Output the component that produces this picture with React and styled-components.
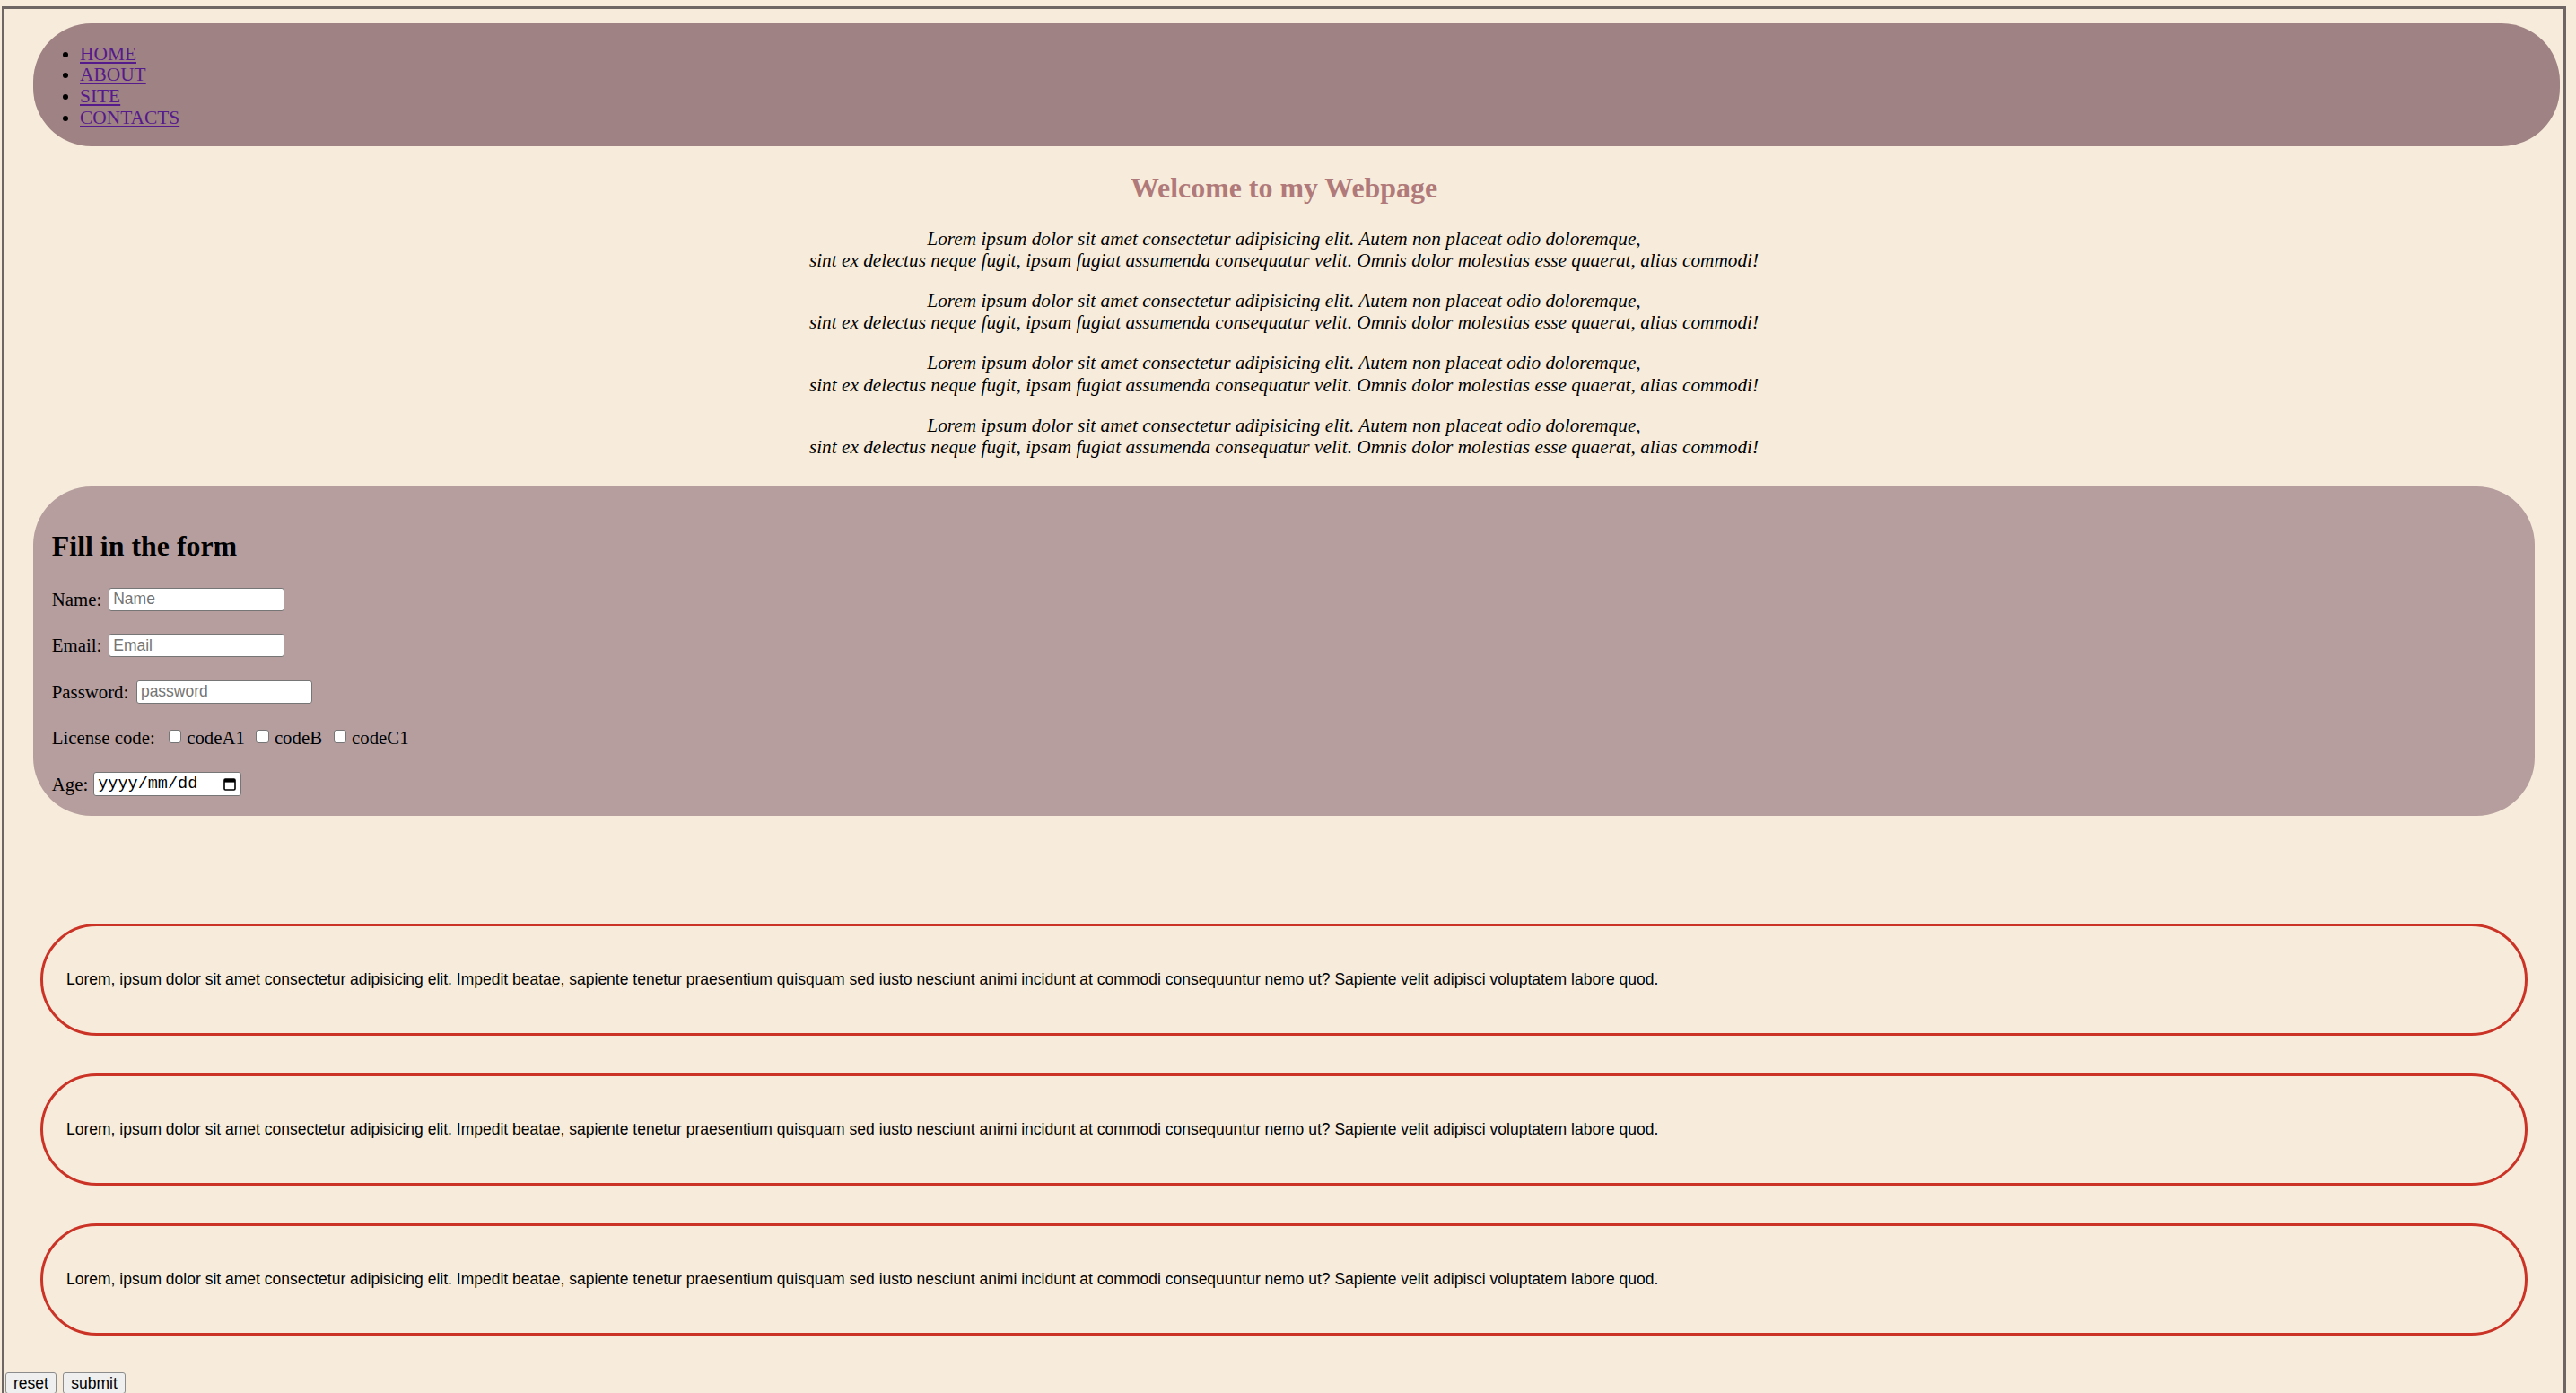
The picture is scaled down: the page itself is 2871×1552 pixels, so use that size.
import React from "react";
import styled, { createGlobalStyle } from "styled-components";

const GlobalStyle = createGlobalStyle`
  body {
    margin: 7px 11px 0 2px;
    background: #f7ecdb;
    font-family: "Liberation Serif", "Times New Roman", serif;
    font-size: 20.8px;
    color: #000;
  }
`;

const Frame = styled.div`
  border: 3px solid #6e6565;
  padding-bottom: 40px;
`;

const Nav = styled.nav`
  margin: 16px 4px 0 32px;
  padding: 22.5px 0 19.1px;
  background: #9f8283;
  border-radius: 65px;
`;

const NavList = styled.ul`
  margin: 0;
  padding-left: 52px;
  font-size: 21.4px;
  line-height: 23.9px;
  list-style: disc;
`;

const NavLink = styled.a`
  color: #551a8b;
  text-decoration: underline;
`;

const Title = styled.h2`
  margin: 28.5px 0 26px;
  text-align: center;
  color: #b07a7a;
  font-size: 31.9px;
  line-height: 35.9px;
  font-weight: bold;
`;

const Para = styled.p`
  margin: 20.8px 0;
  font-style: italic;
  font-size: 21.3px;
  text-align: center;
  line-height: 24.3px;
`;

const FormPanel = styled.form`
  margin: 32px 32px 0 32px;
  padding: 48.5px 20.8px 20.5px;
  background: #b69e9e;
  border-radius: 65px;
`;

const FormTitle = styled.h2`
  margin: 0 0 26px;
  font-size: 31.9px;
  line-height: 35.9px;
  font-weight: bold;
`;

const Row = styled.div`
  display: flex;
  align-items: center;
  height: 30px;
  margin-bottom: ${(p) => (p.$last ? "0" : "21.5px")};
  white-space: nowrap;
`;

const TextInput = styled.input`
  box-sizing: border-box;
  width: 196px;
  height: 26px;
  margin: 0 0 0 ${(p) => p.$gap || "8px"};
  padding: 0 4px;
  border: 1px solid #767676;
  border-radius: 3px;
  background: #fff;
  font-family: "Liberation Sans", Arial, sans-serif;
  font-size: 17.5px;

  &::placeholder {
    color: #757575;
  }
`;

const Check = styled.input`
  appearance: none;
  box-sizing: border-box;
  width: 14.5px;
  height: 14.5px;
  margin: -4px 6px 0 ${(p) => p.$gap || "12.5px"};
  border: 1px solid #767676;
  border-radius: 3px;
  background: #fff;
`;

const DateBox = styled.div`
  box-sizing: border-box;
  display: flex;
  align-items: center;
  justify-content: space-between;
  width: 165px;
  height: 27px;
  margin-left: 6px;
  padding: 0 5px 0 4px;
  border: 1px solid #767676;
  border-radius: 3px;
  background: #fff;
  color: #000;
  font-family: "Liberation Mono", "Courier New", monospace;
  font-size: 18.5px;
`;

const Cards = styled.section`
  display: flex;
  flex-direction: column;
  gap: 42px;
  margin: 120px 40px 0 40px;
`;

const Card = styled.div`
  box-sizing: border-box;
  display: flex;
  align-items: center;
  height: 125px;
  padding: 0 26px;
  border: 3px solid #cb3327;
  border-radius: 65px;
  font-family: "Liberation Sans", Arial, sans-serif;
  font-size: 17.5px;
`;

const ButtonRow = styled.div`
  display: flex;
  gap: 7.4px;
  margin: 41px 0 0 1px;
`;

const Button = styled.button`
  padding: 1px 8px;
  border: 1px solid #8c8c8c;
  border-radius: 3px;
  background: #efefef;
  font-family: "Liberation Sans", Arial, sans-serif;
  font-size: 17.5px;
  line-height: 20px;
  color: #000;
`;

const CalendarIcon = () => (
  <svg width="14" height="15" viewBox="0 0 14 15">
    <rect x="1" y="2" width="12" height="12" rx="1.2" fill="none" stroke="#000" strokeWidth="1.6" />
    <rect x="1" y="2" width="12" height="3.6" fill="#000" />
  </svg>
);

const lorem1 = "Lorem ipsum dolor sit amet consectetur adipisicing elit. Autem non placeat odio doloremque,";
const lorem2 = "sint ex delectus neque fugit, ipsam fugiat assumenda consequatur velit. Omnis dolor molestias esse quaerat, alias commodi!";
const cardText =
  "Lorem, ipsum dolor sit amet consectetur adipisicing elit. Impedit beatae, sapiente tenetur praesentium quisquam sed iusto nesciunt animi incidunt at commodi consequuntur nemo ut? Sapiente velit adipisci voluptatem labore quod.";

export default function App() {
  const links = ["HOME", "ABOUT", "SITE", "CONTACTS"];

  return (
    <>
      <GlobalStyle />
      <Frame>
        <Nav>
          <NavList>
            {links.map((l) => (
              <li key={l}>
                <NavLink href="#">{l}</NavLink>
              </li>
            ))}
          </NavList>
        </Nav>

        <Title>Welcome to my Webpage</Title>
        {[0, 1, 2, 3].map((i) => (
          <Para key={i}>
            {lorem1}
            <br />
            {lorem2}
          </Para>
        ))}

        <FormPanel onSubmit={(e) => e.preventDefault()}>
          <FormTitle>Fill in the form</FormTitle>
          <Row>
            Name:<TextInput type="text" placeholder="Name" />
          </Row>
          <Row>
            Email:<TextInput type="text" placeholder="Email" />
          </Row>
          <Row>
            Password:<TextInput type="password" placeholder="password" $gap="8.6px" />
          </Row>
          <Row>
            License code:
            <Check type="checkbox" $gap="15px" />codeA1
            <Check type="checkbox" />codeB
            <Check type="checkbox" />codeC1
          </Row>
          <Row $last>
            Age:
            <DateBox>
              <span>yyyy/mm/dd</span>
              <CalendarIcon />
            </DateBox>
          </Row>
        </FormPanel>

        <Cards>
          <Card>{cardText}</Card>
          <Card>{cardText}</Card>
          <Card>{cardText}</Card>
        </Cards>

        <ButtonRow>
          <Button type="reset">reset</Button>
          <Button type="submit">submit</Button>
        </ButtonRow>
      </Frame>
    </>
  );
}
